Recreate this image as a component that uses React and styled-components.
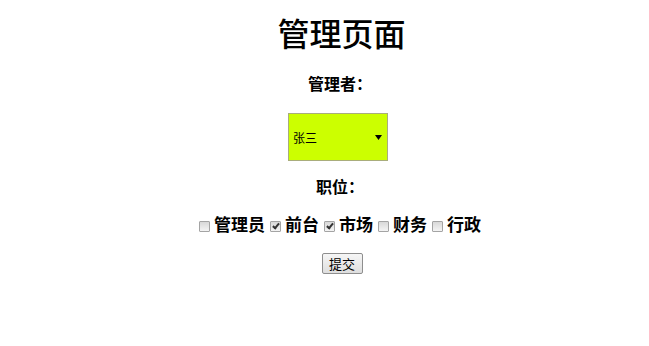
import React, { useState } from 'react';
import styled, { createGlobalStyle } from 'styled-components';

const GlobalStyle = createGlobalStyle`
  body {
    margin: 0 8px;
    background: #fff;
    color: #000;
    font-family: "Liberation Serif", "Noto Sans CJK SC", serif;
  }
`;

const Page = styled.form`
  display: flex;
  flex-direction: column;
  align-items: center;
  padding-left: 31px;
`;

const Title = styled.h1`
  margin: 15px 0 0 3px;
  font-size: 32px;
  line-height: 40px;
  font-weight: 500;
`;

const Label = styled.h4`
  margin: ${p => p.$top}px 0 0;
  font-size: 16px;
  line-height: 20px;
  font-weight: 700;
`;

const SelectBox = styled.div`
  position: relative;
  margin: 18px 4px 0 0;
  width: 100px;
  height: 48px;
`;

const Select = styled.select`
  appearance: none;
  box-sizing: border-box;
  width: 100%;
  height: 100%;
  margin: 0;
  padding: 0 0 0 4px;
  border: 1px solid #a9ad7c;
  border-radius: 0;
  background: #ccff00;
  color: #000;
  font-family: "Noto Sans CJK SC", sans-serif;
  font-size: 12px;
  outline: none;
`;

const Arrow = styled.svg`
  position: absolute;
  right: 6px;
  top: 22px;
  pointer-events: none;
`;

const Row = styled.div`
  display: flex;
  align-items: center;
  gap: 5px;
  margin-top: 17px;
  font-size: 17px;
  line-height: 21px;
  font-weight: 700;
`;

const Option = styled.label`
  display: flex;
  align-items: center;
  gap: 4px;
`;

const Box = styled.input`
  appearance: none;
  position: relative;
  box-sizing: border-box;
  width: 11px;
  height: 11px;
  margin: 1px 0 0;
  border: 1px solid #a4a4a4;
  border-radius: 1px;
  background: linear-gradient(#d8d8d8, #f4f4f4);

  &:checked::after {
    content: '';
    position: absolute;
    left: 3px;
    top: 0px;
    width: 2px;
    height: 5px;
    border: solid #333;
    border-width: 0 2px 2px 0;
    transform: rotate(40deg);
  }
`;

const Submit = styled.button`
  margin: 17px 0 0 4px;
  width: 41px;
  height: 21px;
  padding: 0;
  border: 1px solid #8e8e8e;
  border-radius: 2px;
  background: linear-gradient(#f6f6f6, #dedede);
  color: #000;
  font-family: "Noto Sans CJK SC", sans-serif;
  font-size: 13px;
  line-height: 19px;
`;

const roles = [
  { name: '管理员', checked: false },
  { name: '前台', checked: true },
  { name: '市场', checked: true },
  { name: '财务', checked: false },
  { name: '行政', checked: false },
];

const App = () => {
  const [picked, setPicked] = useState(roles.map(r => r.checked));

  const toggle = i => {
    setPicked(prev => prev.map((v, j) => (j === i ? !v : v)));
  };

  return (
    <>
      <GlobalStyle />
      <Page onSubmit={e => e.preventDefault()}>
        <Title>管理页面</Title>
        <Label $top={20}>管理者：</Label>
        <SelectBox>
          <Select defaultValue="张三">
            <option>张三</option>
            <option>李四</option>
            <option>王五</option>
          </Select>
          <Arrow width="7" height="5" viewBox="0 0 7 5">
            <path d="M0 0h7L3.5 5z" fill="#000" />
          </Arrow>
        </SelectBox>
        <Label $top={17}>职位：</Label>
        <Row>
          {roles.map((r, i) => (
            <Option key={r.name}>
              <Box type="checkbox" checked={picked[i]} onChange={() => toggle(i)} />
              {r.name}
            </Option>
          ))}
        </Row>
        <Submit type="submit">提交</Submit>
      </Page>
    </>
  );
};

export default App;
